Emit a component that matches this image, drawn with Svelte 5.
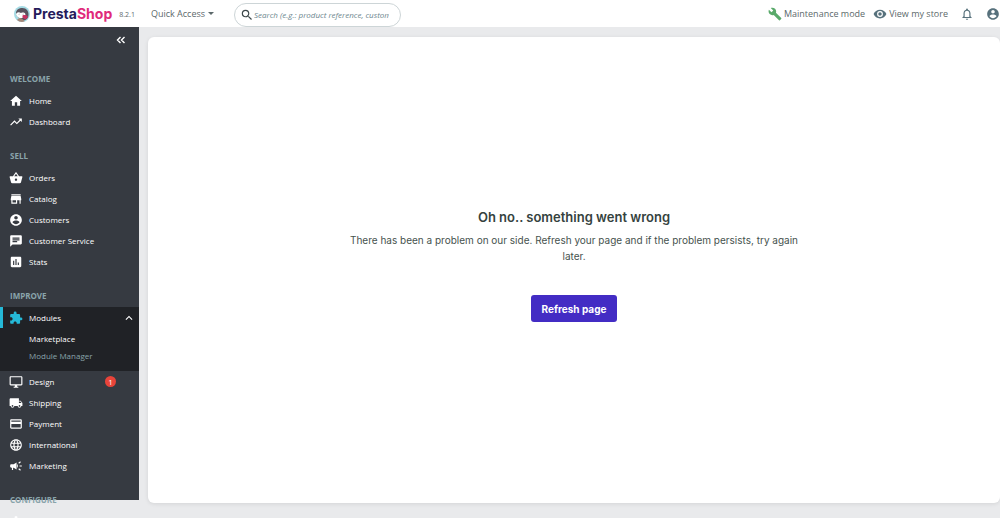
<script>
  const icons = {
    home: 'M10 20v-6h4v6h5v-8h3L12 3 2 12h3v8z',
    trending: 'M16 6l2.29 2.29-4.88 4.88-4-4L2 16.59 3.41 18l6-6 4 4 6.3-6.29L22 12V6z',
    basket: 'M17.21 9l-4.38-6.56c-.19-.28-.51-.42-.83-.42-.32 0-.64.14-.83.43L6.79 9H2c-.55 0-1 .45-1 1 0 .09.01.18.04.27l2.54 9.27c.23.84 1 1.46 1.92 1.46h13c.92 0 1.69-.62 1.93-1.46l2.54-9.27L23 10c0-.55-.45-1-1-1h-4.79zM9 9l3-4.4L15 9H9zm3 8c-1.1 0-2-.9-2-2s.9-2 2-2 2 .9 2 2-.9 2-2 2z',
    store: 'M20 4H4v2h16V4zm1 10v-2l-1-5H4l-1 5v2h1v6h10v-6h4v6h2v-6h1zm-9 4H6v-4h6v4z',
    account: 'M12 2C6.48 2 2 6.48 2 12s4.48 10 10 10 10-4.48 10-10S17.52 2 12 2zm0 3c1.66 0 3 1.34 3 3s-1.34 3-3 3-3-1.34-3-3 1.34-3 3-3zm0 14.2c-2.5 0-4.71-1.28-6-3.22.03-1.99 4-3.08 6-3.08 1.99 0 5.97 1.09 6 3.08-1.29 1.94-3.5 3.22-6 3.22z',
    chat: 'M20 2H4c-1.1 0-1.99.9-1.99 2L2 22l4-4h14c1.1 0 2-.9 2-2V4c0-1.1-.9-2-2-2zM6 9h12v2H6V9zm8 5H6v-2h8v2zm4-6H6V6h12v2z',
    stats: 'M19 3H5c-1.1 0-2 .9-2 2v14c0 1.1.9 2 2 2h14c1.1 0 2-.9 2-2V5c0-1.1-.9-2-2-2zM9 17H7v-7h2v7zm4 0h-2V7h2v10zm4 0h-2v-4h2v4z',
    puzzle: 'M20.5 11H19V7c0-1.1-.9-2-2-2h-4V3.500a2.500 2.500 0 0 0-5 0V5H4c-1.100 0-1.990.9-1.990 2v3.800H3.500c1.490 0 2.700 1.210 2.700 2.700s-1.210 2.700-2.700 2.700H2V20c0 1.100.9 2 2 2h3.800v-1.500c0-1.490 1.210-2.700 2.700-2.700 1.490 0 2.700 1.210 2.700 2.700V22H17c1.100 0 2-.9 2-2v-4h1.500a2.500 2.500 0 0 0 0-5z',
    desktop: 'M21 2H3c-1.1 0-2 .9-2 2v12c0 1.1.9 2 2 2h7v2H8v2h8v-2h-2v-2h7c1.100 0 2-.9 2-2V4c0-1.100-.9-2-2-2zm0 14H3V4h18v12z',
    truck: 'M20 8h-3V4H3c-1.1 0-2 .9-2 2v11h2c0 1.660 1.340 3 3 3s3-1.340 3-3h6c0 1.660 1.340 3 3 3s3-1.340 3-3h2v-5l-3-4zM6 18.500a1.500 1.500 0 1 1 0-3 1.500 1.500 0 0 1 0 3zm13.500-9l1.960 2.500H17V9.500h2.500zm-1.500 9a1.500 1.500 0 1 1 0-3 1.500 1.500 0 0 1 0 3z',
    card: 'M20 4H4c-1.110 0-1.990.89-1.990 2L2 18c0 1.110.89 2 2 2h16c1.110 0 2-.89 2-2V6c0-1.110-.89-2-2-2zm0 14H4v-6h16v6zm0-10H4V6h16v2z',
    globe: 'M11.990 2C6.470 2 2 6.480 2 12s4.470 10 9.990 10C17.520 22 22 17.520 22 12S17.520 2 11.990 2zm6.930 6h-2.950c-.32-1.250-.78-2.450-1.380-3.560 1.840.63 3.370 1.910 4.330 3.560zM12 4.040c.83 1.200 1.480 2.530 1.910 3.960h-3.820c.43-1.430 1.080-2.760 1.910-3.960zM4.260 14C4.100 13.360 4 12.690 4 12s.1-1.360.26-2h3.380a16.500 16.500 0 0 0 0 4H4.260zm.82 2h2.950c.32 1.250.78 2.450 1.380 3.560-1.840-.63-3.370-1.900-4.330-3.560zm2.950-8H5.080c.96-1.660 2.490-2.930 4.330-3.560C8.810 5.550 8.350 6.750 8.030 8zM12 19.960c-.83-1.200-1.480-2.530-1.910-3.960h3.820c-.43 1.430-1.080 2.760-1.910 3.960zM14.340 14H9.660a14.700 14.700 0 0 1 0-4h4.680a14.700 14.700 0 0 1 0 4zm.25 5.560c.6-1.110 1.060-2.310 1.380-3.560h2.950c-.96 1.650-2.490 2.930-4.330 3.560zM16.360 14a16.500 16.500 0 0 0 0-4h3.380c.16.64.26 1.310.26 2s-.1 1.360-.26 2h-3.380z',
    campaign: 'M18 11v2h4v-2h-4zm-2 6.610c.96.71 2.210 1.650 3.200 2.390.4-.53.8-1.070 1.200-1.600-.99-.74-2.240-1.680-3.200-2.400l-1.200 1.610zM20.400 5.600c-.4-.53-.8-1.070-1.200-1.600-.99.74-2.240 1.680-3.200 2.400.4.53.8 1.070 1.200 1.600.96-.72 2.210-1.650 3.200-2.400zM4 9c-1.100 0-2 .9-2 2v2c0 1.100.9 2 2 2h1v4h2v-4h1l5 3V6L8 9H4zm11.500 3c0-1.330-.58-2.530-1.500-3.350v6.690c.92-.81 1.500-2.010 1.500-3.340z',
    gear: 'M10 2h4l.5 3 2 1 2.800-1 2 3.400-2.300 2v3.200l2.300 2-2 3.400-2.800-1-2 1-.5 3h-4l-.5-3-2-1-2.800 1-2-3.400 2.300-2v-3.200l-2.300-2L4.700 5l2.800 1 2-1zM12 8.500a3.500 3.500 0 1 0 0 7 3.500 3.500 0 0 0 0-7z',
    search: 'M15.500 14h-.79l-.28-.27A6.470 6.470 0 0 0 16 9.500 6.500 6.500 0 1 0 9.500 16c1.610 0 3.090-.59 4.230-1.570l.27.28v.79l5 4.990L20.490 19l-4.990-5zm-6 0C7.010 14 5 11.990 5 9.500S7.010 5 9.500 5 14 7.010 14 9.500 11.990 14 9.500 14z',
    wrench: 'M22.700 19l-9.100-9.100c.9-2.300.4-5-1.500-6.900-2-2-5-2.400-7.400-1.300L9 6 6 9 1.600 4.700C.4 7.100.9 10.100 2.900 12.100c1.900 1.900 4.600 2.400 6.900 1.500l9.100 9.100c.4.4 1 .4 1.400 0l2.300-2.300c.5-.4.5-1.100.1-1.400z',
    eye: 'M12 4.500C7 4.500 2.730 7.610 1 12c1.730 4.390 6 7.500 11 7.500s9.270-3.110 11-7.500c-1.730-4.390-6-7.500-11-7.500zM12 17a5 5 0 1 1 0-10 5 5 0 0 1 0 10zm0-8a3 3 0 1 0 0 6 3 3 0 0 0 0-6z',
    bell: 'M12 22c1.100 0 2-.9 2-2h-4c0 1.100.9 2 2 2zm6-6v-5c0-3.070-1.630-5.640-4.500-6.320V4a1.500 1.500 0 0 0-3 0v.68C7.640 5.360 6 7.920 6 11v5l-2 2v1h16v-1l-2-2zm-2 1H8v-6c0-2.480 1.510-4.500 4-4.500s4 2.020 4 4.500v6z',
    up: 'M7.410 15.410L12 10.830l4.590 4.580L18 14l-6-6-6 6z'
  };
  const sections = [
    { title: 'Welcome', items: [['Home', 'home'], ['Dashboard', 'trending']] },
    { title: 'Sell', items: [['Orders', 'basket'], ['Catalog', 'store'], ['Customers', 'account'], ['Customer Service', 'chat'], ['Stats', 'stats']] },
    { title: 'Improve', items: [['Modules', 'puzzle'], ['Design', 'desktop'], ['Shipping', 'truck'], ['Payment', 'card'], ['International', 'globe'], ['Marketing', 'campaign']] },
    { title: 'Configure', items: [['', 'gear']] }
  ];
</script>

{#snippet icon(name)}
  <svg class="icon" viewBox="0 0 24 24" aria-hidden="true"><path fill-rule="evenodd" d={icons[name]} /></svg>
{/snippet}

<div class="page">
  <header>
    <a class="brand" href="#home">
      <svg viewBox="0 0 32 32" aria-hidden="true">
        <circle cx="16" cy="16" r="16" fill="#a5dbe4" />
        <path d="M4 15C4 7 10 4 17 4c8 0 12 6 12 13 0 8-5 12-12 12-4-4-13-7-13-14z" fill="#59545f" />
        <path d="M4 17c1-5 6-6 10-3 4-2 8-1 9 3l-3 5c-4 4-13 3-16-5z" fill="#fff" />
        <path d="M6 28c3-5 9-4 13 0l2 3c-5 2-11 1-15-3z" fill="#a58778" />
        <path d="M9 17c1-1 2-1 3 0M17 17c1-1 2-1 3 0" fill="none" stroke="#8b8790" />
        <path d="M17 19c4-2 9-1 11 3l-5 5-6-4z" fill="#c83363" />
      </svg>
      <span class="name">Presta<span>Shop</span></span>
    </a>
    <span class="version">8.2.1</span>
    <button class="quick">Quick Access <i></i></button>
    <label class="search">
      {@render icon('search')}
      <input type="text" aria-label="Search" placeholder="Search (e.g.: product reference, custom" />
    </label>
    <div class="tools">
      <a class="maintenance" href="#maintenance">{@render icon('wrench')}Maintenance mode</a>
      <a href="#store">{@render icon('eye')}View my store</a>
      <button aria-label="Notifications">{@render icon('bell')}</button>
      <button aria-label="Account">{@render icon('account')}</button>
    </div>
  </header>
  <div class="body">
    <nav>
      <button class="collapse" aria-label="Collapse menu">
        <svg viewBox="0 0 10 8" aria-hidden="true"><path d="M4.500 1l-3 3 3 3M8.500 1l-3 3 3 3" /></svg>
      </button>
      {#each sections as section}
        <section>
          <h2>{section.title}</h2>
          {#each section.items as [label, name]}
            <div class:open={label === 'Modules'}>
              <a class="item" href="#{name}" aria-label={label || 'Settings'}>
                {@render icon(name)}{#if label}<span>{label}</span>{/if}
                {#if label === 'Modules'}<b class="arrow">{@render icon('up')}</b>{/if}
                {#if label === 'Design'}<b class="badge">1</b>{/if}
              </a>
              {#if label === 'Modules'}
                <div class="sub">
                  <a class="current" href="#marketplace">Marketplace</a>
                  <a href="#manager">Module Manager</a>
                </div>
              {/if}
            </div>
          {/each}
        </section>
      {/each}
    </nav>
    <main>
      <div class="message">
        <h1>Oh no.. something went wrong</h1>
        <p>There has been a problem on our side. Refresh your page and if the problem persists, try again later.</p>
        <button>Refresh page</button>
      </div>
    </main>
  </div>
</div>

<style>
  :global(body) { margin: 0; background: #e9eaec; }
  .page, .page * { box-sizing: border-box; }
  .page { height: 100vh; display: flex; flex-direction: column; overflow: hidden; font-family: "Open Sans", sans-serif; font-size: 8px; }
  a { color: inherit; text-decoration: none; }
  button { font: inherit; color: inherit; border: 0; padding: 0; background: none; }
  .icon { width: 14px; height: 14px; flex: none; fill: currentColor; display: block; }
  header { height: 27px; flex: none; display: flex; align-items: center; background: #fff; color: #5c696b; font-size: 9px; padding-left: 14px; }
  .brand { display: flex; align-items: center; gap: 3px; }
  .brand svg { width: 16px; height: 16px; }
  .name { font: 700 14px/20px Inter, sans-serif; color: #251b5b; }
  .name span { color: #df2b7b; }
  .version { margin-left: 7px; font-size: 7px; line-height: 12px; padding-top: 2px; }
  .quick { margin-left: 16px; display: flex; align-items: center; gap: 3px; }
  .quick i { border: 3px solid transparent; border-top-color: currentColor; border-bottom: 0; }
  .search { width: 167px; height: 24px; margin: 3px 0 0 20px; padding: 0 11px 0 5px; display: flex; align-items: center; border: 1px solid #cdd5d7; border-radius: 12px; background: #fff; align-self: flex-start; flex: none; z-index: 1; }
  .search .icon { fill: #3d484a; }
  .search input { min-width: 0; flex: 1; border: 0; outline: 0; padding: 0; font: italic 8px/16px "Open Sans", sans-serif; background: none; }
  .search input::placeholder { color: #6c868e; opacity: 1; }
  .tools { margin-left: auto; display: flex; align-items: center; gap: 12px; }
  .tools a { display: flex; align-items: center; gap: 2px; white-space: nowrap; }
  .tools .maintenance { margin-right: -4px; }
  .tools .icon { fill: #57717c; }
  .tools .maintenance .icon { fill: #5aaa6b; }
  .body { flex: 1; min-height: 0; display: flex; }
  nav { width: 139px; flex: none; margin-bottom: 18px; background: #363a41; color: #fff; }
  .collapse { display: block; margin: 9px 13px 19px auto; }
  .collapse svg { display: block; width: 10px; height: 8px; fill: none; stroke: #fff; stroke-width: 1.400; }
  nav section { padding-top: 5px; margin-bottom: 8px; }
  h2 { margin: 0; padding-left: 10px; font-size: 8px; line-height: 22px; font-weight: 700; color: #8aa4ab; text-transform: uppercase; }
  .item { height: 21px; padding: 0 9px; display: flex; align-items: center; gap: 6px; }
  .item > b { margin-left: auto; }
  .open { background: #202226; }
  .open .item { box-shadow: inset 3px 0 #25b9d7; padding-right: 3px; }
  .open .item > .icon { fill: #25b9d7; }
  .badge { width: 11px; height: 11px; margin-right: 14px; border-radius: 50%; background: #e8443a; font-weight: 400; line-height: 11px; text-align: center; }
  .sub { padding: 2px 0 7px 29px; color: #8aa4ab; }
  .sub a { display: block; line-height: 17px; }
  .sub .current { color: #fff; }
  main { flex: 1; min-width: 0; margin: 10px 0 15px 9px; padding-bottom: 12px; display: flex; align-items: center; justify-content: center; border-radius: 6px; background: #fff; box-shadow: 0 1px 4px #00000018; }
  .message { width: 450px; text-align: center; color: #46524e; }
  h1 { margin: 0; font: 600 13px/22px Inter, sans-serif; color: #35423e; }
  p { margin: 4px 0 31px; font: 10px/16px Inter, sans-serif; }
  .message button { height: 27px; padding: 0 11px; border-radius: 3px; background: #432cc4; color: #fff; font: 700 10px/16px Inter, sans-serif; }
</style>
